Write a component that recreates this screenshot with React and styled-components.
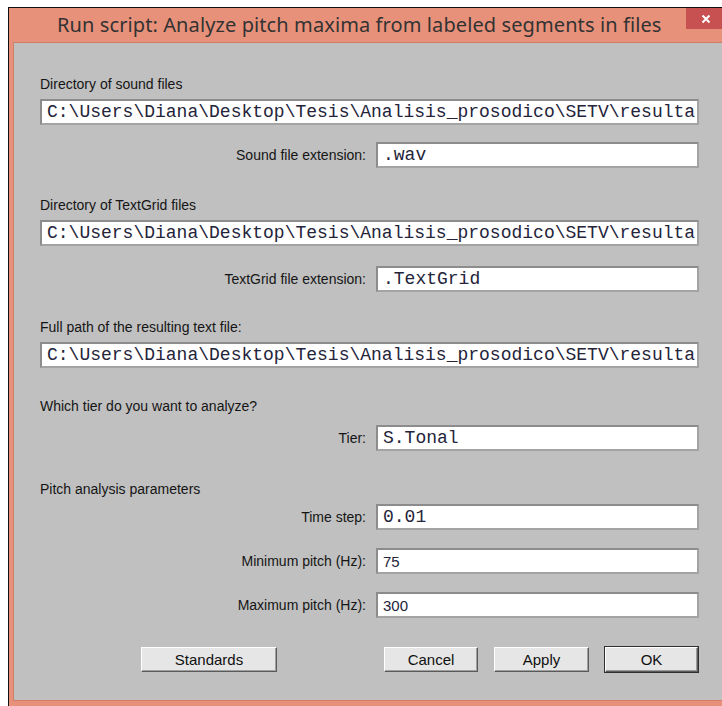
import React from "react";
import styled, { createGlobalStyle } from "styled-components";

const Global = createGlobalStyle`
  html, body {
    margin: 0;
    padding: 0;
    background: #ffffff;
    overflow: hidden;
  }
  body {
    width: 722px;
    height: 706px;
  }
`;

const Page = styled.div`
  padding: 7px 0 0 8px;
  height: 706px;
  box-sizing: border-box;
  overflow: hidden;
`;

const Window = styled.div`
  width: 760px;
  height: 699px;
  box-sizing: border-box;
  border-left: 1px solid #101010;
  border-top: 1px solid #101010;
  background: #e8917a;
  display: flex;
  flex-direction: column;
`;

const TitleBar = styled.div`
  height: 34px;
  display: flex;
  align-items: flex-start;
  position: relative;
`;

const TitleText = styled.div`
  margin-left: 48px;
  margin-top: 4px;
  font-family: "Noto Sans", "Open Sans", sans-serif;
  font-size: 20px;
  line-height: 26px;
  color: #333333;
  white-space: nowrap;
  letter-spacing: 0.1px;
`;

const CloseButton = styled.div`
  position: absolute;
  left: 677px;
  top: 0;
  width: 40px;
  height: 21px;
  background: #c75050;
  display: flex;
  align-items: center;
  justify-content: center;
`;

const Client = styled.div`
  margin: 0 0 5px 4px;
  flex: 1;
  background: #c0c0c0;
  border-top: 1px solid #d27d67;
  border-left: 1px solid #d27d67;
  border-bottom: 1px solid #d27d67;
  box-sizing: border-box;
  padding: 31px 0 0 26px;
  font-family: "Liberation Sans", Arial, sans-serif;
  font-size: 14px;
  color: #151515;
`;

const Form = styled.div`
  width: 659px;
  display: flex;
  flex-direction: column;
`;

const SectionLabel = styled.div`
  height: 20px;
  line-height: 20px;
  margin-top: ${(p) => p.$gap ?? 0}px;
  white-space: nowrap;
`;

const FieldRow = styled.div`
  display: grid;
  grid-template-columns: 1fr 323px;
  column-gap: 10px;
  align-items: center;
  margin-top: ${(p) => p.$gap ?? 0}px;
`;

const FieldLabel = styled.div`
  text-align: right;
  white-space: nowrap;
`;

const TextField = styled.div`
  height: 26px;
  box-sizing: border-box;
  margin-top: ${(p) => p.$gap ?? 0}px;
  background: #ffffff;
  border: 2px solid #a3a3a3;
  border-top-color: #8c8c8c;
  border-left-color: #8c8c8c;
  padding: 0 5px;
  overflow: hidden;
  white-space: nowrap;
  display: flex;
  align-items: center;
  font-family: ${(p) =>
    p.$sans
      ? '"Liberation Sans", Arial, sans-serif'
      : '"Liberation Mono", "Courier New", monospace'};
  font-size: ${(p) => (p.$sans ? 15 : 18)}px;
  color: #24243a;
`;

const ButtonBar = styled.div`
  display: flex;
  align-items: center;
  margin-top: 29px;
  padding-left: 101px;
`;

const ButtonGroup = styled.div`
  display: flex;
  gap: 16px;
  margin-left: auto;
  margin-right: 1px;
`;

const Button = styled.div`
  width: ${(p) => p.$w}px;
  height: 25px;
  box-sizing: border-box;
  display: flex;
  align-items: center;
  justify-content: center;
  background: #e6e6e6;
  border: 1px solid;
  border-color: #ffffff #5a5a5a #5a5a5a #ffffff;
  box-shadow: ${(p) =>
    p.$default
      ? "inset -1px -1px 0 #9a9a9a, 0 0 0 1px #303030"
      : "inset -1px -1px 0 #a0a0a0"};
  font-family: "Liberation Sans Narrow", "Liberation Sans", Arial, sans-serif;
  font-size: 15px;
  color: #101010;
`;

const fields = {
  soundDir: "C:\\Users\\Diana\\Desktop\\Tesis\\Analisis_prosodico\\SETV\\resulta",
  gridDir: "C:\\Users\\Diana\\Desktop\\Tesis\\Analisis_prosodico\\SETV\\resulta",
  outFile: "C:\\Users\\Diana\\Desktop\\Tesis\\Analisis_prosodico\\SETV\\resulta",
};

function CloseGlyph() {
  return (
    <svg width="10" height="10" viewBox="0 0 10 10">
      <path d="M1.5 1.5 L8.5 8.5 M8.5 1.5 L1.5 8.5" stroke="#ffffff" strokeWidth="2" />
    </svg>
  );
}

export default function App() {
  return (
    <>
      <Global />
      <Page>
        <Window>
          <TitleBar>
            <TitleText>Run script: Analyze pitch maxima from labeled segments in files</TitleText>
            <CloseButton>
              <CloseGlyph />
            </CloseButton>
          </TitleBar>
          <Client>
            <Form>
              <SectionLabel>Directory of sound files</SectionLabel>
              <TextField $gap={5}>{fields.soundDir}</TextField>
              <FieldRow $gap={17}>
                <FieldLabel>Sound file extension:</FieldLabel>
                <TextField>.wav</TextField>
              </FieldRow>

              <SectionLabel $gap={27}>Directory of TextGrid files</SectionLabel>
              <TextField $gap={5}>{fields.gridDir}</TextField>
              <FieldRow $gap={20}>
                <FieldLabel>TextGrid file extension:</FieldLabel>
                <TextField>.TextGrid</TextField>
              </FieldRow>

              <SectionLabel $gap={25}>Full path of the resulting text file:</SectionLabel>
              <TextField $gap={5}>{fields.outFile}</TextField>

              <SectionLabel $gap={28}>Which tier do you want to analyze?</SectionLabel>
              <FieldRow $gap={9}>
                <FieldLabel>Tier:</FieldLabel>
                <TextField>S.Tonal</TextField>
              </FieldRow>

              <SectionLabel $gap={28}>Pitch analysis parameters</SectionLabel>
              <FieldRow $gap={5}>
                <FieldLabel>Time step:</FieldLabel>
                <TextField>0.01</TextField>
              </FieldRow>
              <FieldRow $gap={18}>
                <FieldLabel>Minimum pitch (Hz):</FieldLabel>
                <TextField $sans>75</TextField>
              </FieldRow>
              <FieldRow $gap={18}>
                <FieldLabel>Maximum pitch (Hz):</FieldLabel>
                <TextField $sans>300</TextField>
              </FieldRow>

              <ButtonBar>
                <Button $w={136}>Standards</Button>
                <ButtonGroup>
                  <Button $w={94}>Cancel</Button>
                  <Button $w={95}>Apply</Button>
                  <Button $w={93} $default>OK</Button>
                </ButtonGroup>
              </ButtonBar>
            </Form>
          </Client>
        </Window>
      </Page>
    </>
  );
}
